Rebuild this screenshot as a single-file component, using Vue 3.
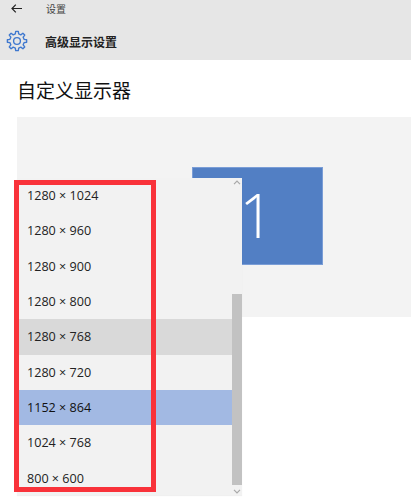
<script setup>
const modes = ['1280 × 1024', '1280 × 960', '1280 × 900', '1280 × 800', '1280 × 768', '1280 × 720', '1152 × 864', '1024 × 768', '800 × 600']
const rowClass = (m) => ({ hover: m === '1280 × 768', selected: m === '1152 × 864' })

// Eight-toothed gear outline, centred on (12,12)
const teeth = 8
const outer = 10.6
const inner = 7.9
const step = (Math.PI * 2) / teeth
const pts = []
for (let i = 0; i < teeth; i++) {
  const a = i * step - Math.PI / 2
  const pt = (r, o) => `${(12 + r * Math.cos(a + o)).toFixed(2)} ${(12 + r * Math.sin(a + o)).toFixed(2)}`
  pts.push(pt(inner, -step * 0.3), pt(outer, -step * 0.17), pt(outer, step * 0.17), pt(inner, step * 0.3))
}
const gearPath = 'M' + pts.join('L') + 'Z'
</script>

<template>
  <div class="page">
    <header class="top">
      <div class="nav">
        <svg class="back" width="11" height="9" viewBox="0 0 11 9" fill="none" stroke="#222" stroke-width="1.2">
          <path d="M11 4.5H1M4.8.7 1 4.5l3.8 3.8" />
        </svg>
        <span class="nav-title">设置</span>
      </div>
      <div class="title-row">
        <svg class="gear" width="22" height="22" viewBox="0 0 24 24" fill="none" stroke="#3f78cf" stroke-width="1.5" stroke-linejoin="round">
          <circle cx="12" cy="12" r="3.7" />
          <path :d="gearPath" />
        </svg>
        <span class="title">高级显示设置</span>
      </div>
    </header>
    <h1 class="heading">自定义显示器</h1>
    <section class="preview">
      <div class="monitor">1</div>
    </section>
    <div class="dropdown">
      <div class="list">
        <div v-for="m in modes" :key="m" class="row" :class="rowClass(m)">{{ m }}</div>
      </div>
      <div class="scrollbar">
        <svg class="arrow up" width="8" height="5" viewBox="0 0 8 5" fill="none" stroke="#a8a8a8" stroke-width="1.2"><path d="M1 4.2 4 1.2l3 3" /></svg>
        <div class="thumb"></div>
        <svg class="arrow down" width="8" height="5" viewBox="0 0 8 5" fill="none" stroke="#a8a8a8" stroke-width="1.2"><path d="M1 .8l3 3 3-3" /></svg>
      </div>
    </div>
    <div class="redbox"></div>
  </div>
</template>

<style scoped>
.page {
  position: relative;
  width: 411px;
  height: 500px;
  overflow: hidden;
  background: #fff;
  font-family: "Liberation Sans", "Noto Sans CJK SC", sans-serif;
  color: #1a1a1a;
}
.top {
  height: 60px;
  background: #e6e6e6;
  display: flex;
  flex-direction: column;
}
.nav {
  height: 16px;
  display: flex;
  align-items: center;
  padding-left: 11px;
  gap: 24px;
}
.back { flex: none; }
.nav-title { font-size: 10px; color: #444; }
.title-row {
  display: flex;
  align-items: center;
  margin-top: 8px;
  height: 34px;
  padding-left: 6px;
  gap: 17px;
}
.gear { flex: none; }
.title { font-size: 12px; font-weight: 700; color: #222; }
.heading {
  margin: 19px 0 0 17px;
  height: 38px;
  font-size: 19px;
  line-height: 26px;
  font-weight: 400;
  color: #111;
}
.preview {
  position: relative;
  margin-left: 17px;
  height: 200px;
  background: #f3f3f3;
}
.monitor {
  position: absolute;
  left: 175px;
  top: 50px;
  width: 131px;
  height: 98px;
  box-sizing: border-box;
  border: 1px solid #7a9dd6;
  background: #527fc4;
  color: #fff;
  font-family: "Open Sans", sans-serif;
  font-weight: 300;
  font-size: 60px;
  line-height: 94px;
  padding-right: 2px;
  text-align: center;
}
.dropdown {
  position: absolute;
  left: 17px;
  top: 178px;
  width: 225px;
  height: 317px;
  background: #f2f2f2;
  box-shadow: 0 1px 1px rgba(0, 0, 0, 0.06);
}
.list {
  position: absolute;
  left: 0;
  right: 10px;
  top: 0;
}
.row {
  height: 35.35px;
  line-height: 36.5px;
  padding-left: 10px;
  font-family: "Open Sans", "Liberation Sans", sans-serif;
  font-size: 12.6px;
  color: #222;
}
.row.hover { background: #d9d9d9; }
.row.selected { background: #a2b9e3; color: #111; }
.scrollbar {
  position: absolute;
  right: 0;
  top: 0;
  bottom: 0;
  width: 10px;
}
.arrow { position: absolute; left: 1px; }
.arrow.up { top: 2px; }
.arrow.down { bottom: 1px; }
.thumb {
  position: absolute;
  left: 0;
  right: 0;
  top: 116px;
  height: 191px;
  background: #c2c2c2;
}
.redbox {
  position: absolute;
  left: 14px;
  top: 180px;
  width: 142px;
  height: 312px;
  box-sizing: border-box;
  border: 5px solid #f9323a;
}
</style>
